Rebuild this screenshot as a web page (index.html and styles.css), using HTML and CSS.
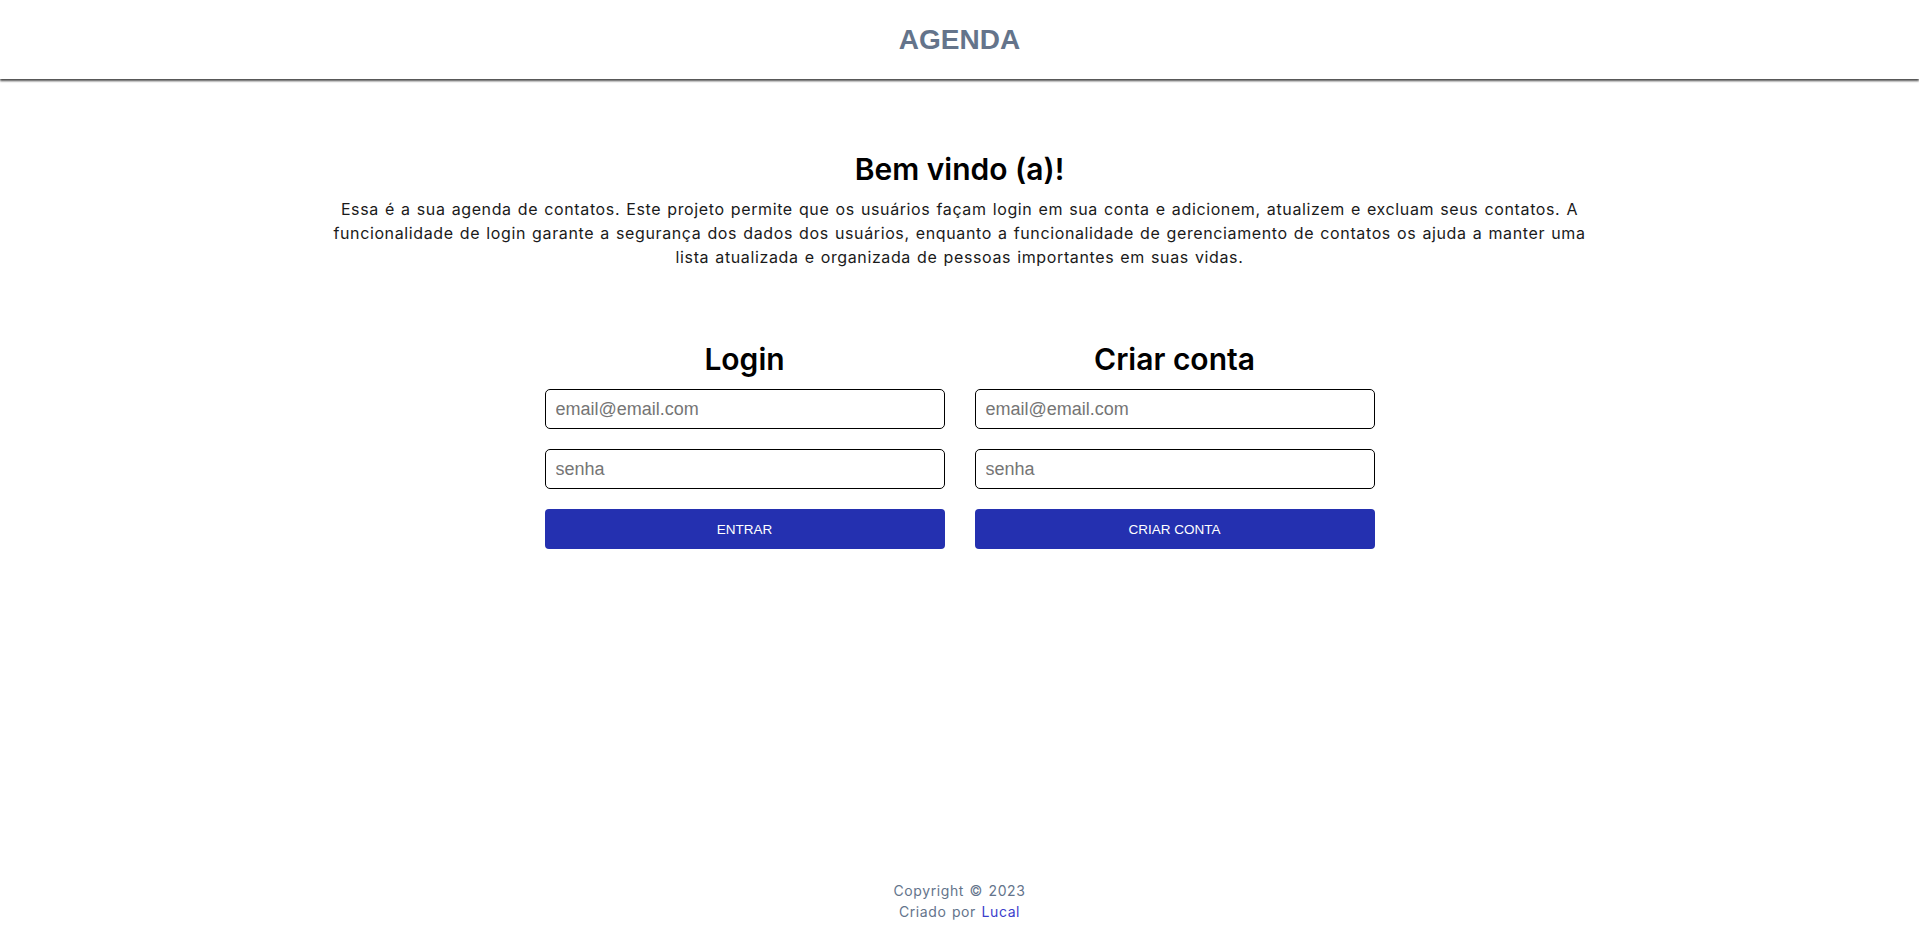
FILE: index.html
```html
<!DOCTYPE html>
<html lang="pt-BR">
<head>
<meta charset="utf-8">
<title>Agenda</title>
<link rel="stylesheet" href="styles.css">
</head>
<body>
<div class="page">
  <header class="topbar">
    <h1 class="brand">AGENDA</h1>
  </header>
  <main class="main">
    <section class="intro">
      <h2 class="intro-title">Bem vindo (a)!</h2>
      <p class="intro-text">Essa é a sua agenda de contatos. Este projeto permite que os usuários façam login em sua conta e adicionem, atualizem e excluam seus contatos. A funcionalidade de login garante a segurança dos dados dos usuários, enquanto a funcionalidade de gerenciamento de contatos os ajuda a manter uma lista atualizada e organizada de pessoas importantes em suas vidas.</p>
    </section>
    <section class="forms">
      <form class="auth-form">
        <h3 class="form-title">Login</h3>
        <input class="field" type="email" placeholder="email@email.com">
        <input class="field" type="password" placeholder="senha">
        <button class="btn" type="button">ENTRAR</button>
      </form>
      <form class="auth-form">
        <h3 class="form-title">Criar conta</h3>
        <input class="field" type="email" placeholder="email@email.com">
        <input class="field" type="password" placeholder="senha">
        <button class="btn" type="button">CRIAR CONTA</button>
      </form>
    </section>
  </main>
  <footer class="footer">
    <p class="footer-line">Copyright © 2023</p>
    <p class="footer-line">Criado por <a class="footer-link" href="#">Lucal</a></p>
  </footer>
</div>
</body>
</html>
```

FILE: styles.css
```css
* { box-sizing: border-box; }
html, body { margin: 0; padding: 0; }
body {
  font-family: "Inter", "Liberation Sans", sans-serif;
  color: #111;
  background: #fff;
}
.page {
  min-height: 100vh;
  display: flex;
  flex-direction: column;
}
.topbar {
  height: 79px;
  display: flex;
  align-items: center;
  justify-content: center;
  box-shadow: 0 2px 2px 0 rgba(0,0,0,0.7);
  position: relative;
}
.brand {
  margin: 0;
  font-family: "Liberation Sans", Arial, sans-serif;
  font-size: 28px;
  font-weight: 700;
  color: #64748b;
  line-height: 1;
}
.main {
  flex: 1;
  display: flex;
  flex-direction: column;
  align-items: center;
  padding-top: 72px;
}
.intro {
  max-width: 1280px;
  text-align: center;
}
.intro-title {
  margin: 0 0 10px;
  font-size: 30px;
  line-height: 36px;
  font-weight: 600;
  color: #000;
}
.intro-text {
  margin: 0;
  font-size: 16px;
  line-height: 24px;
  letter-spacing: 0.62px;
  word-spacing: 1px;
  color: #1a1a1a;
}
.forms {
  display: flex;
  gap: 30px;
  margin-top: 72px;
}
.auth-form {
  width: 400px;
  display: flex;
  flex-direction: column;
  gap: 20px;
}
.form-title {
  margin: 0 0 -8px;
  text-align: center;
  font-size: 30px;
  line-height: 36px;
  font-weight: 600;
  color: #000;
}
.field {
  height: 40px;
  border: 1px solid #000;
  border-radius: 5px;
  padding: 0 10px;
  font-family: "Liberation Sans", Arial, sans-serif;
  font-size: 18px;
  color: #000;
}
.field::placeholder { color: #757575; }
.btn {
  height: 40px;
  border: none;
  border-radius: 4px;
  background: #2430b0;
  color: #fff;
  font-family: "Liberation Sans", Arial, sans-serif;
  font-size: 13.5px;
  cursor: pointer;
}
.footer {
  text-align: center;
  padding-bottom: 12px;
}
.footer-line {
  margin: 0;
  font-size: 14px;
  line-height: 21px;
  letter-spacing: 0.6px;
  word-spacing: 1px;
  color: #64748b;
}
.footer-link {
  color: #3b40cc;
  text-decoration: none;
}
```
